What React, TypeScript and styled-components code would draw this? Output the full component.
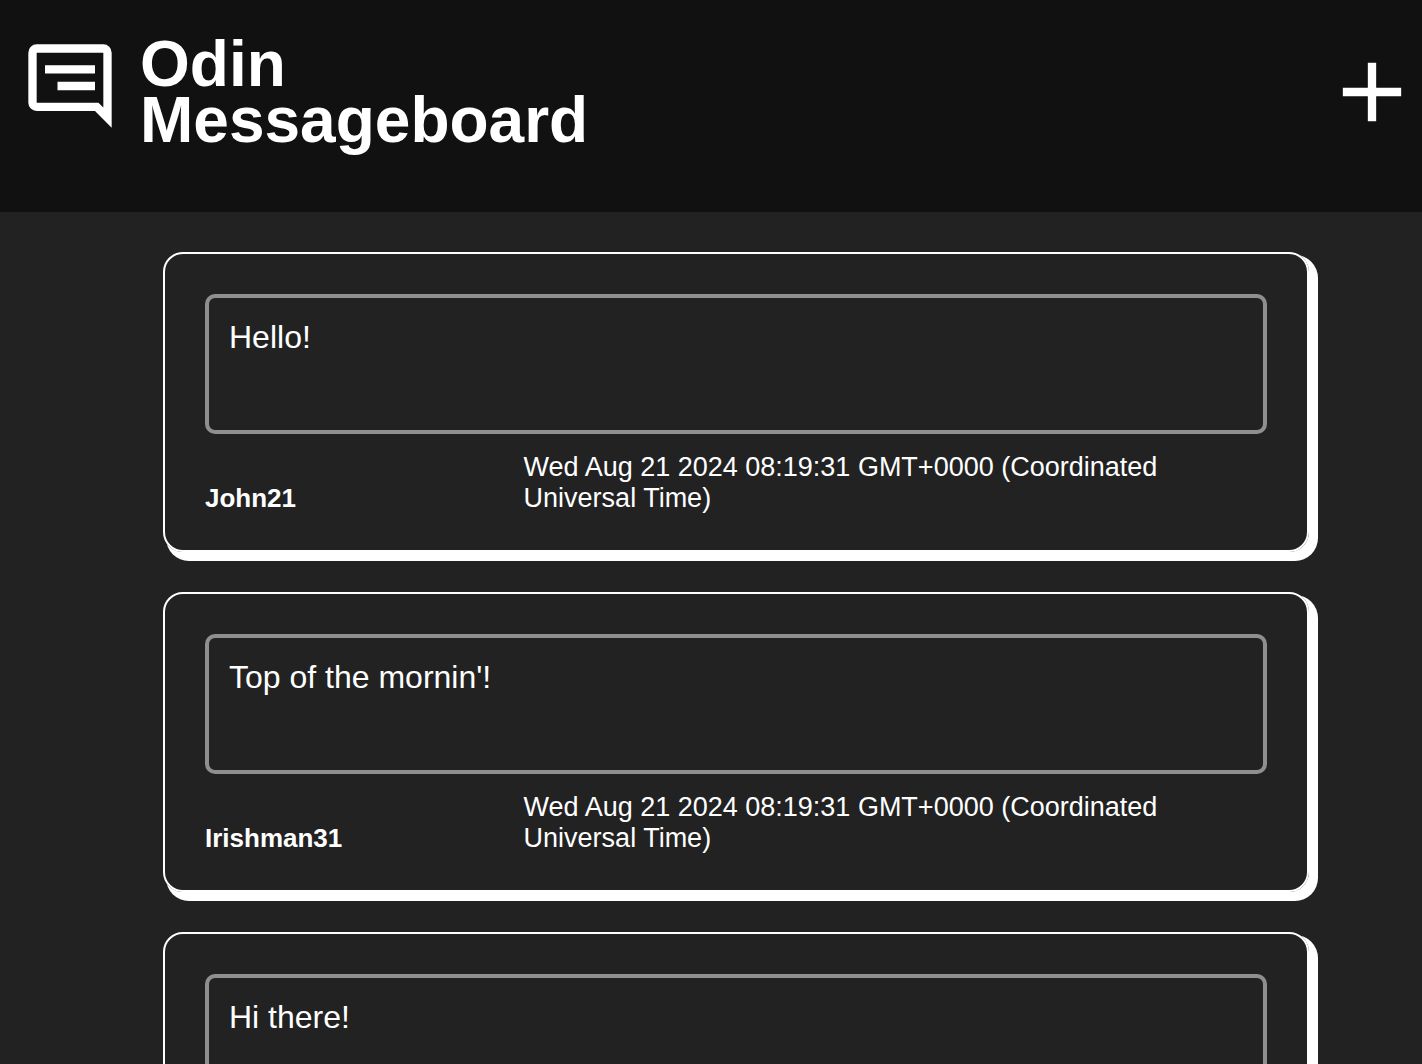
import React from "react";
import styled, { createGlobalStyle } from "styled-components";

const GlobalStyle = createGlobalStyle`
  *, *::before, *::after { box-sizing: border-box; }
  body {
    margin: 0;
    background: #222;
    color: #fff;
    font-family: "Liberation Sans", Helvetica, Arial, sans-serif;
  }
`;

const Page = styled.div`
  height: 100vh;
  overflow: hidden;
`;

const Header = styled.header`
  display: flex;
  align-items: flex-start;
  justify-content: space-between;
  padding: 36px 0 64px 20px;
  background: #111;
`;

const Brand = styled.div`
  display: flex;
  gap: 20px;
`;

const Title = styled.h1`
  width: min-content;
  margin: 0;
  padding-bottom: 0;
  font-size: 64px;
  line-height: 56px;
  font-weight: 700;
`;

const Icon = styled.svg`
  display: block;
  flex: none;
  width: 100px;
  height: 100px;
  fill: #fff;
`;

const AddButton = styled.button`
  margin: 6px 0 0;
  padding: 0;
  border: 0;
  background: none;
  cursor: pointer;
`;

const MessageList = styled.ul`
  display: grid;
  gap: 40px;
  margin: 0;
  padding: 40px 113px 40px 163px;
  list-style: none;
`;

const Card = styled.li`
  min-height: 300px;
  padding: 40px 40px 36px;
  border: 2px solid #fff;
  border-radius: 20px;
  box-shadow: 6px 6px 0 3px #fff;
`;

const MessageText = styled.p`
  min-height: 140px;
  margin: 0;
  padding: 20px;
  border: 4px solid #8f8f8f;
  border-radius: 10px;
  font-size: 32px;
  line-height: 38px;
`;

const Meta = styled.div`
  display: grid;
  grid-template-columns: 30% 60%;
  align-items: end;
  margin-top: 18px;
  line-height: 31px;
`;

const Author = styled.strong`
  font-size: 26px;
  font-weight: 700;
`;

const Added = styled.time`
  font-size: 27px;
`;

type Message = { text: string; author?: string; added?: string };

const ADDED = "Wed Aug 21 2024 08:19:31 GMT+0000 (Coordinated Universal Time)";

const messages: Message[] = [
  { text: "Hello!", author: "John21", added: ADDED },
  { text: "Top of the mornin'!", author: "Irishman31", added: ADDED },
  { text: "Hi there!" },
];

export default function App() {
  return (
    <>
      <GlobalStyle />
      <Page>
        <Header>
          <Brand>
            <Icon viewBox="0 0 24 24" aria-hidden="true">
              <path
                fillRule="evenodd"
                d="M4 2h16a2 2 0 0 1 2 2v18l-4-4H4a2 2 0 0 1-2-2V4a2 2 0 0 1 2-2zM4 4v12h14.83L20 17.17V4zM6 7h12v2H6zM9 11h9v2H9z"
              />
            </Icon>
            <Title>Odin Messageboard</Title>
          </Brand>
          <AddButton type="button" aria-label="New message">
            <Icon viewBox="0 0 24 24" aria-hidden="true">
              <path d="M19 13h-6v6h-2v-6H5v-2h6V5h2v6h6z" />
            </Icon>
          </AddButton>
        </Header>
        <main>
          <MessageList>
            {messages.map((message) => (
              <Card key={message.text}>
                <MessageText>{message.text}</MessageText>
                {message.author && (
                  <Meta>
                    <Author>{message.author}</Author>
                    <Added>{message.added}</Added>
                  </Meta>
                )}
              </Card>
            ))}
          </MessageList>
        </main>
      </Page>
    </>
  );
}
